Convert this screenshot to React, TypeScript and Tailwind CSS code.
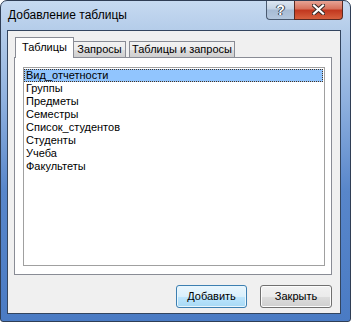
import React from 'react';

const font = { fontFamily: '"Liberation Sans", Arial, sans-serif' };

const tables = [
  'Вид_отчетности',
  'Группы',
  'Предметы',
  'Семестры',
  'Список_студентов',
  'Студенты',
  'Учеба',
  'Факультеты',
];

const CloseGlyph = () => (
  <svg width="13" height="11" viewBox="0 0 13 11">
    <path d="M2 1.5 L11 9.5 M11 1.5 L2 9.5" stroke="#3a2a28" strokeWidth="4.2" strokeLinecap="square" />
    <path d="M2 1.5 L11 9.5 M11 1.5 L2 9.5" stroke="#ffffff" strokeWidth="2.2" strokeLinecap="square" />
  </svg>
);

export default function App() {
  return (
    <div
      className="w-[351px] h-[322px] flex flex-col border border-[#2f3e55] rounded-t-[7px] rounded-b-[3px] overflow-hidden bg-[linear-gradient(180deg,#c6daf1_0px,#b4cce9_30px,#8fb1df_100px,#5886ca_190px,#4a7bc4_100%)]"
      style={font}
    >
      {/* Title bar */}
      <div className="h-[29px] flex justify-between items-start">
        <div className="pl-[7px] pt-[6px] text-[12px] leading-[16px] text-black">Добавление таблицы</div>
        <div className="flex mr-[7px] -mt-px">
          <div className="w-[28px] h-[20px] flex items-center justify-center border border-t-0 border-r-0 border-[#4a5a70] rounded-bl-[4px] bg-[linear-gradient(180deg,#dfe8f3_0%,#c3d2e4_48%,#a7bbd4_52%,#b4c7de_100%)]">
            <span className="text-[14px] font-bold text-white leading-none [text-shadow:0_0_1px_#2a3340,0_0_1px_#2a3340,1px_0_0_#3b4656,-1px_0_0_#3b4656]">?</span>
          </div>
          <div className="w-[49px] h-[20px] flex items-center justify-center border border-t-0 border-[#5a2a22] rounded-br-[4px] bg-[linear-gradient(180deg,#e9aa9c_0%,#d8735e_45%,#c2381f_55%,#d7603e_100%)]">
            <CloseGlyph />
          </div>
        </div>
      </div>

      {/* Client area */}
      <div className="flex-1 pl-[6px] pr-[9px] pb-[7px] flex">
        <div className="flex-1 border border-[#33455f] bg-[#f0f0f0] flex flex-col pl-[6px] pr-[8px] pt-[6px]">
          {/* Tabs */}
          <div className="h-[20px] flex items-end pl-px text-[11px] text-black">
            <div className="relative z-10 -mb-px w-[59px] h-[21px] bg-white border border-b-0 border-[#898c95] flex items-center justify-center pb-[2px]">
              Таблицы
            </div>
            <div className="w-[52px] h-[16px] border border-b-0 border-l-0 border-[#898c95] bg-[linear-gradient(180deg,#f2f2f2_0%,#ebebeb_50%,#dddddd_51%,#cfcfcf_100%)] flex items-center justify-center">
              Запросы
            </div>
            <div className="ml-[3px] w-[106px] h-[16px] border border-b-0 border-[#898c95] bg-[linear-gradient(180deg,#f2f2f2_0%,#ebebeb_50%,#dddddd_51%,#cfcfcf_100%)] flex items-center justify-center">
              Таблицы и запросы
            </div>
          </div>

          {/* Tab panel */}
          <div className="h-[218px] border border-[#898c95] bg-white pl-[8px] pt-[9px] pr-[6px] pb-[8px]">
            <div className="h-full border border-[#a0a0a0] bg-white">
              <ul className="pt-px text-[11px] text-black">
                {tables.map((t, i) => (
                  <li
                    key={t}
                    className={
                      i === 0
                        ? 'h-[13px] leading-[11px] pl-[1px] mr-px bg-[#91c5fe] border border-dotted border-[#4a3420]'
                        : 'h-[13px] leading-[13px] pl-[2px]'
                    }
                  >
                    {t}
                  </li>
                ))}
              </ul>
            </div>
          </div>

          {/* Buttons */}
          <div className="mt-[10px] flex justify-end gap-[13px] text-[11px] text-black">
            <button className="w-[71px] h-[23px] rounded-[3px] border border-[#3c7fb1] bg-[linear-gradient(180deg,#eaf6fd_0%,#d9f0fc_50%,#bee6fd_51%,#a7d9f5_100%)] shadow-[inset_0_0_0_1px_#e9f6fd]">
              Добавить
            </button>
            <button className="w-[72px] h-[23px] rounded-[3px] border border-[#707070] bg-[linear-gradient(180deg,#f2f2f2_0%,#ebebeb_50%,#dddddd_51%,#cfcfcf_100%)] shadow-[inset_0_0_0_1px_#fcfcfc]">
              Закрыть
            </button>
          </div>
        </div>
      </div>
    </div>
  );
}
